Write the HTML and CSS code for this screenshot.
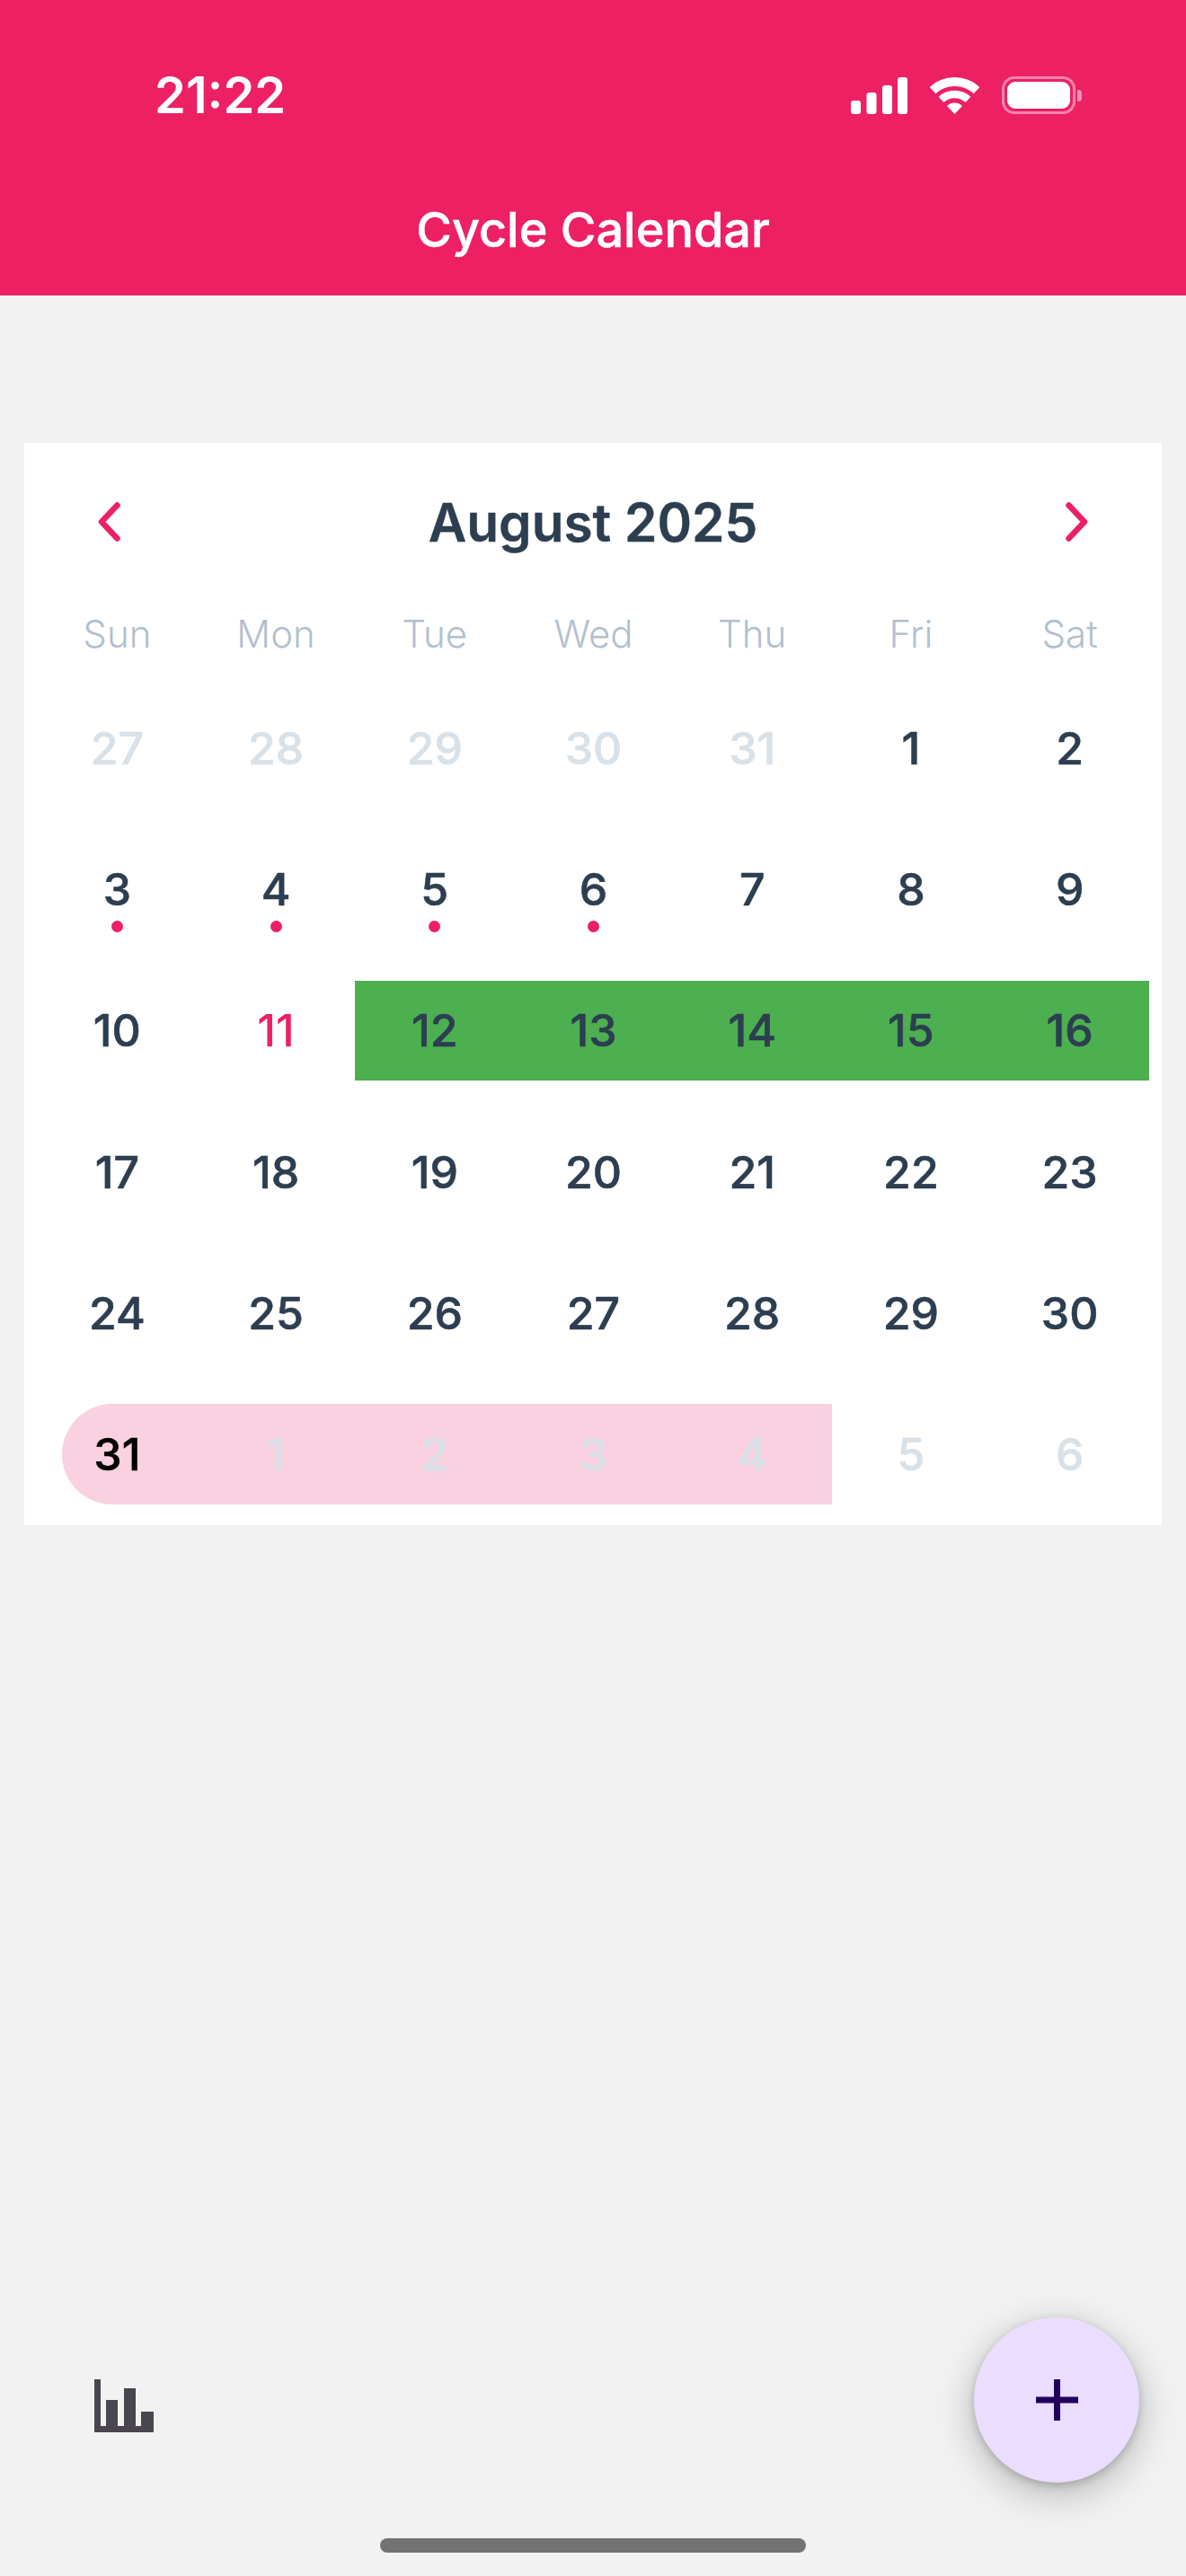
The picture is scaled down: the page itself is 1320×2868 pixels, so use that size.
FILE: index.html
```html
<!DOCTYPE html>
<html lang="en">
<head>
    <meta charset="utf-8">
    <title>Cycle Calendar</title>
    <link rel="stylesheet" href="styles.css">
</head>
<body>
    <div class="page">
        <header class="topbar">
            <div class="status">
                <span class="time">21:22</span>
                <div class="status-icons">
                    <svg class="signal" width="63" height="41" viewBox="0 0 63 41" fill="#fff">
                        <rect x="0" y="26" width="11" height="15" rx="3"/>
                        <rect x="17.5" y="17" width="11" height="24" rx="3"/>
                        <rect x="35" y="9" width="11" height="32" rx="3"/>
                        <rect x="52" y="0" width="11" height="41" rx="3"/>
                    </svg>
                    <svg class="wifi" width="55" height="41" viewBox="0 0 55 41" fill="none" stroke="#fff">
                        <path d="M3 14.7A36 36 0 0 1 52 14.7" stroke-width="10"/>
                        <path d="M12.5 24.9A22 22 0 0 1 42.5 24.9" stroke-width="8.5"/>
                        <path d="M27.5 41L19 31.9A12.5 12.5 0 0 1 36 31.9Z" fill="#fff" stroke="none"/>
                    </svg>
                    <div class="battery">
                        <div class="battery-body"><div class="battery-level"></div></div>
                        <div class="battery-nub"></div>
                    </div>
                </div>
            </div>
            <h1 class="title">Cycle Calendar</h1>
        </header>

        <main class="card">
            <div class="month-nav">
                <svg width="60" height="60" viewBox="0 0 60 60" fill="none" stroke="#ec2063" stroke-width="6.5" stroke-linecap="round" stroke-linejoin="round">
                    <path d="M39.5 11.5L22 30L39.5 48.5"/>
                </svg>
                <h2 class="month">August 2025</h2>
                <svg width="60" height="60" viewBox="0 0 60 60" fill="none" stroke="#ec2063" stroke-width="6.5" stroke-linecap="round" stroke-linejoin="round">
                    <path d="M20.5 11.5L38 30L20.5 48.5"/>
                </svg>
            </div>
            <div class="weekdays">
                <span>Sun</span><span>Mon</span><span>Tue</span><span>Wed</span><span>Thu</span><span>Fri</span><span>Sat</span>
            </div>
            <div class="days">
                <div class="day muted">27</div>
                <div class="day muted">28</div>
                <div class="day muted">29</div>
                <div class="day muted">30</div>
                <div class="day muted">31</div>
                <div class="day">1</div>
                <div class="day">2</div>

                <div class="day dot">3</div>
                <div class="day dot">4</div>
                <div class="day dot">5</div>
                <div class="day dot">6</div>
                <div class="day">7</div>
                <div class="day">8</div>
                <div class="day">9</div>

                <div class="day">10</div>
                <div class="day today">11</div>
                <div class="day fertile">12</div>
                <div class="day fertile">13</div>
                <div class="day fertile">14</div>
                <div class="day fertile">15</div>
                <div class="day fertile">16</div>

                <div class="day">17</div>
                <div class="day">18</div>
                <div class="day">19</div>
                <div class="day">20</div>
                <div class="day">21</div>
                <div class="day">22</div>
                <div class="day">23</div>

                <div class="day">24</div>
                <div class="day">25</div>
                <div class="day">26</div>
                <div class="day">27</div>
                <div class="day">28</div>
                <div class="day">29</div>
                <div class="day">30</div>

                <div class="day period period-start">31</div>
                <div class="day muted period">1</div>
                <div class="day muted period">2</div>
                <div class="day muted period">3</div>
                <div class="day muted period">4</div>
                <div class="day muted">5</div>
                <div class="day muted">6</div>
            </div>
        </main>

        <footer class="bottom">
            <svg class="chart" width="66" height="59" viewBox="0 0 66 59" fill="#4a4650">
                <path d="M0 0H7V52H13V23H26V52H33V10H46V52H52V36H66V59H0Z"/>
            </svg>
            <button class="fab">
                <svg width="47" height="46" viewBox="0 0 47 46" fill="#21005d">
                    <path d="M20 0H27V19.5H47V26.5H27V46H20V26.5H0V19.5H20Z"/>
                </svg>
            </button>
        </footer>
        <div class="home-bar"></div>
    </div>
</body>
</html>
```

FILE: styles.css
```css
* {
    box-sizing: border-box;
}

body {
    margin: 0;
    font-family: Inter, "Liberation Sans", sans-serif;
    background-color: #f2f2f2;
}

.page {
    height: 2868px;
    display: flex;
    flex-direction: column;
}

/* pink bar with the phone status line */
.topbar {
    height: 329px;
    padding-top: 76px;
    background-color: #ec2063;
    color: white;
}

.status {
    height: 60px;
    padding: 0 116px 0 172px;
    display: flex;
    justify-content: space-between;
    align-items: center;
}

.time {
    font-size: 56px;
    font-weight: 600;
}

.status-icons {
    display: flex;
    align-items: center;
    gap: 25px;
}

.battery {
    display: flex;
    align-items: center;
    gap: 2px;
}

.battery-body {
    width: 82px;
    height: 42px;
    padding: 3px;
    border: 3px solid rgba(255, 255, 255, 0.45);
    border-radius: 14px;
}

.battery-level {
    height: 100%;
    background-color: white;
    border-radius: 9px;
}

.battery-nub {
    width: 5px;
    height: 13px;
    background-color: rgba(255, 255, 255, 0.5);
    border-radius: 0 4px 4px 0;
}

.title {
    margin: 90px 0 0;
    font-size: 54px;
    line-height: 60px;
    font-weight: 500;
    -webkit-text-stroke: 0.5px white;
    text-align: center;
}

/* calendar */
.card {
    margin: 164px 27px 0;
    padding: 0 14px 23px 15px;
    background-color: white;
}

.month-nav {
    height: 176px;
    padding: 0 50px 0 49px;
    display: flex;
    justify-content: space-between;
    align-items: center;
}

.month {
    margin: 0;
    font-size: 58.5px;
    font-weight: 600;
    -webkit-text-stroke: 0.4px #2c3e50;
    color: #2c3e50;
}

.weekdays {
    height: 72px;
    margin-bottom: 36px;
    display: grid;
    grid-template-columns: repeat(7, 1fr);
    align-items: center;
    text-align: center;
    font-size: 42px;
    font-weight: 300;
    color: #b2bfce;
}

.days {
    display: grid;
    grid-template-columns: repeat(7, 1fr);
    grid-auto-rows: 111.5px;
    row-gap: 45.8px;
}

.day {
    position: relative;
    display: flex;
    justify-content: center;
    align-items: center;
    font-size: 50px;
    font-weight: 500;
    -webkit-text-stroke: 0.6px currentColor;
    color: #2c3e50;
}

.muted {
    color: #d9e1e8;
}

.today {
    color: #ec2063;
    -webkit-text-stroke: 0;
}

.dot::after {
    content: "";
    position: absolute;
    left: 50%;
    bottom: 8px;
    width: 13px;
    height: 13px;
    margin-left: -6.5px;
    border-radius: 50%;
    background-color: #ec2063;
}

.fertile {
    background-color: #4caf50;
}

.period {
    background-color: #f9d1e0;
}

.period-start {
    margin-left: 27px;
    padding-right: 27px;
    border-radius: 56px 0 0 56px;
    color: black;
}

/* bottom row */
.bottom {
    margin-top: auto;
    padding: 0 52px 0 105px;
    display: flex;
    justify-content: space-between;
    align-items: center;
}

.chart {
    margin-top: 13px;
}

.fab {
    width: 184px;
    height: 184px;
    padding: 0;
    border: none;
    border-radius: 50%;
    background-color: #eaddff;
    display: flex;
    justify-content: center;
    align-items: center;
    box-shadow: 0 12px 44px rgba(0, 0, 0, 0.26), 0 3px 10px rgba(0, 0, 0, 0.18);
}

.home-bar {
    width: 474px;
    height: 16px;
    margin: 62px auto 26px;
    border-radius: 8px;
    background-color: #737373;
}
```
